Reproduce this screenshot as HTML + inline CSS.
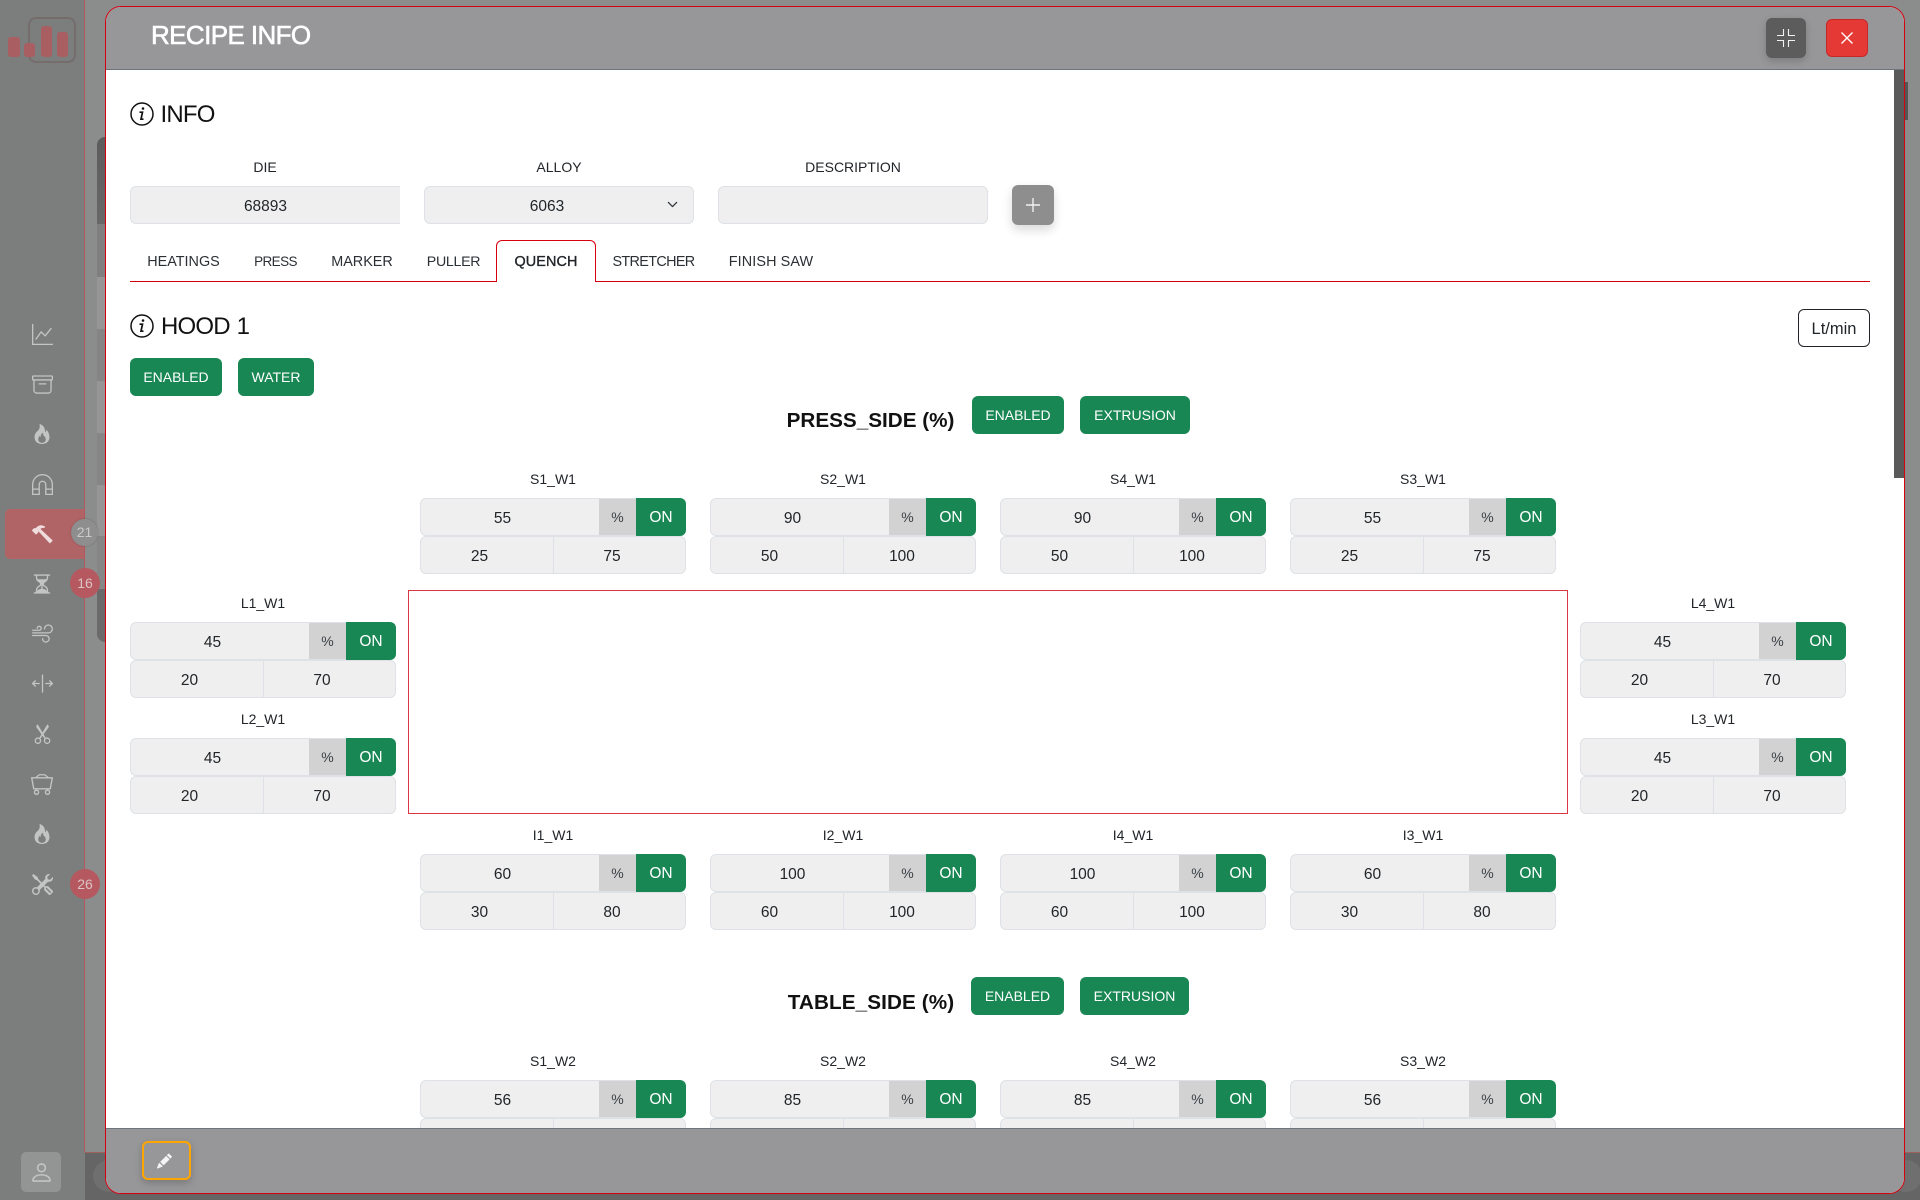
<!DOCTYPE html>
<html lang="en">
<head>
<meta charset="utf-8">
<title>Recipe Info</title>
<style>
html,body{margin:0;padding:0;width:1920px;height:1200px;overflow:hidden;background:#7c7e7d;font-family:"Liberation Sans",sans-serif;color:#212529}
*{box-sizing:border-box}
.a{position:absolute}
.t{position:absolute;white-space:nowrap;text-align:center;transform:translateX(-50%);line-height:20px}
svg{position:absolute;display:block}
.ic{fill:#c3c5c4}
.modal{position:absolute;left:105px;top:6px;width:1800px;height:1188px;border:1px solid #d7000f;border-radius:16px;overflow:hidden;background:#fff}
.in{position:absolute;left:-106px;top:-7px;width:1920px;height:1200px}
.f{position:absolute;background:#efefef;border:1px solid #dee2e6;height:38px}
.btn{position:absolute;background:#198754;color:#fff;border-radius:6px;height:38px;line-height:39px;text-align:center;font-size:14px;white-space:nowrap}
.g{position:absolute;width:266px;height:76px;font-size:15.5px}
.g .lb{position:absolute;left:0;width:266px;top:-29.5px;height:20px;line-height:20px;text-align:center;font-size:14px}
.g .n{position:absolute;left:0;top:0;width:179px;height:38px;background:#efefef;border:1px solid #dee2e6;border-right:0;border-radius:6px 0 0 6px;line-height:39px;text-align:center;padding-right:15px}
.g .p{position:absolute;left:179px;top:0;width:37px;height:38px;background:#d2d2d2;border:1px solid #dee2e6;border-width:1px 0;line-height:37px;text-align:center;font-size:14px;color:#3a3f44}
.g .o{position:absolute;left:216px;top:0;width:50px;height:38px;background:#198754;color:#fff;border-radius:0 6px 6px 0;line-height:40px;text-align:center}
.g .x{position:absolute;left:0;top:38px;width:134px;height:38px;background:#efefef;border:1px solid #dee2e6;border-radius:6px 0 0 6px;line-height:39px;text-align:center;padding-right:15px}
.g .y{position:absolute;left:133px;top:38px;width:133px;height:38px;background:#efefef;border:1px solid #dee2e6;border-radius:0 6px 6px 0;line-height:39px;text-align:center;padding-right:15px}
.h{position:absolute;font-size:24px;letter-spacing:-.8px;line-height:30px;white-space:nowrap;color:#111}
.sec{position:absolute;font-size:20.7px;font-weight:bold;line-height:28px;white-space:nowrap;transform:translateX(-50%);color:#111}
.tab{font-size:14.4px;color:#2b3035;top:252px}
</style>
</head>
<body>

<!-- background behind the modal -->
<div class="a" style="left:85px;top:0;width:1835px;height:1152px;background:#8b8d8c"></div>
<div class="a" style="left:97px;top:137px;width:8px;height:87px;background:linear-gradient(#5c5c5c,#686868);border-radius:8px 0 0 0"></div>
<div class="a" style="left:97px;top:224px;width:8px;height:53px;background:#7f7f7f"></div>
<div class="a" style="left:97px;top:277px;width:8px;height:52px;background:#969696"></div>
<div class="a" style="left:97px;top:329px;width:8px;height:52px;background:#858585"></div>
<div class="a" style="left:97px;top:381px;width:8px;height:52px;background:#969696"></div>
<div class="a" style="left:97px;top:433px;width:8px;height:52px;background:#868686"></div>
<div class="a" style="left:97px;top:485px;width:8px;height:51px;background:#969696"></div>
<div class="a" style="left:97px;top:536px;width:8px;height:53px;background:#868686"></div>
<div class="a" style="left:97px;top:589px;width:8px;height:53px;background:#6a6a6a;border-radius:0 0 0 8px"></div>
<div class="a" style="left:1905px;top:82px;width:3px;height:38px;background:#555"></div>
<div class="a" style="left:85px;top:1152px;width:1835px;height:48px;background:#646564;border-top:1px solid #a06060"></div>
<div class="a" style="left:93px;top:1160px;width:32px;height:32px;border-radius:50%;background:#6f6f6f"></div>
<div class="a" style="left:1890px;top:1160px;width:32px;height:32px;border-radius:50%;background:#6f6f6f"></div>

<!-- sidebar -->
<div class="a" style="left:0;top:0;width:85px;height:1200px;background:#7c7e7d"></div>
<div class="a" style="left:84px;top:0;width:1px;height:1152px;background:#b3585e"></div>

<!-- logo -->
<div class="a" style="left:28px;top:17px;width:48px;height:46px;border:2px solid #756c6c;border-radius:8px"></div>
<div class="a" style="left:8px;top:37px;width:12px;height:20px;background:#a95f61;border-radius:3px"></div>
<div class="a" style="left:24px;top:43px;width:11px;height:14px;background:#a95f61;border-radius:3px"></div>
<div class="a" style="left:41px;top:26px;width:11px;height:31px;background:#a95f61;border-radius:3px"></div>
<div class="a" style="left:57px;top:32px;width:11px;height:25px;background:#a95f61;border-radius:3px"></div>

<div class="a" style="left:5px;top:509px;width:79px;height:50px;background:#b06466;border-radius:5px 0 0 5px"></div>

<svg class="ic" style="left:32px;top:324px" width="21" height="21" viewBox="0 0 16 16"><path d="M0 0h1v15h15v1H0V0Zm14.817 3.113a.5.5 0 0 1 .07.704l-4.5 5.5a.5.5 0 0 1-.74.037L7.06 6.767l-3.656 5.027a.5.5 0 0 1-.808-.588l4-5.5a.5.5 0 0 1 .758-.06l2.609 2.61 4.15-5.073a.5.5 0 0 1 .704-.07Z"/></svg>
<svg class="ic" style="left:32px;top:374px" width="21" height="21" viewBox="0 0 16 16"><path d="M0 2a1 1 0 0 1 1-1h14a1 1 0 0 1 1 1v2a1 1 0 0 1-1 1v7.5a2.5 2.5 0 0 1-2.5 2.5h-9A2.5 2.5 0 0 1 1 12.5V5a1 1 0 0 1-1-1V2zm2 3v7.5A1.5 1.5 0 0 0 3.5 14h9a1.5 1.5 0 0 0 1.5-1.5V5H2zm13-3H1v2h14V2zM5 7.5a.5.5 0 0 1 .5-.5h5a.5.5 0 0 1 0 1h-5a.5.5 0 0 1-.5-.5z"/></svg>
<svg class="ic" style="left:32px;top:424px" width="20" height="20" viewBox="0 0 16 16"><path fill-rule="evenodd" d="M8 16c3.314 0 6-2 6-5.5 0-1.5-.5-4-2.5-6 .25 1.5-1.25 2-1.25 2C11 4 9 .5 6 0c.357 2 .5 4-2 6-1.25 1-2 2.729-2 4.5C2 14 4.686 16 8 16Zm0-1c-1.657 0-3-1-3-2.75 0-.75.25-2 1.25-3C6.125 10 7 10.5 7 10.5c-.375-1.25.5-3.25 2-3.5-.179 1-.25 2 1 3 .625.5 1 1.364 1 2.25C11 14 9.657 15 8 15Z"/></svg>
<svg class="ic" style="left:32px;top:474px" width="21" height="21" viewBox="0 0 16 16"><path d="M8 1a7 7 0 0 0-7 7v3h4V8a3 3 0 0 1 6 0v3h4V8a7 7 0 0 0-7-7Zm7 11h-4v3h4v-3ZM5 12H1v3h4v-3ZM0 8a8 8 0 1 1 16 0v8h-6V8a2 2 0 1 0-4 0v8H0V8Z"/></svg>
<svg style="left:32px;top:524px;fill:#efdcdc" width="21" height="21" viewBox="0 0 16 16"><path d="M9.972 2.508a.5.5 0 0 0-.16-.556l-.178-.129a5.009 5.009 0 0 0-2.076-.783C6.215.862 4.504 1.229 2.84 3.133H1.786a.5.5 0 0 0-.354.147L.146 4.567a.5.5 0 0 0 0 .706l2.571 2.579a.5.5 0 0 0 .708 0l1.286-1.29a.5.5 0 0 0 .146-.353V5.57l8.387 8.873A.5.5 0 0 0 14 14.5l1.5-1.5a.5.5 0 0 0 .017-.689l-9.129-8.63c.747-.456 1.772-.839 3.112-.839a.5.5 0 0 0 .472-.334z"/></svg>
<svg class="ic" style="left:31px;top:573px" width="22" height="22" viewBox="0 0 16 16"><path d="M2.5 15a.5.5 0 1 1 0-1h1v-1a4.5 4.5 0 0 1 2.557-4.06c.29-.139.443-.377.443-.59v-.7c0-.213-.154-.451-.443-.59A4.5 4.5 0 0 1 3.5 3V2h-1a.5.5 0 0 1 0-1h11a.5.5 0 0 1 0 1h-1v1a4.5 4.5 0 0 1-2.557 4.06c-.29.139-.443.377-.443.59v.7c0 .213.154.451.443.59A4.5 4.5 0 0 1 12.5 13v1h1a.5.5 0 0 1 0 1h-11zm2-13v1c0 .537.12 1.045.337 1.5h6.326c.216-.455.337-.963.337-1.5V2h-7zm3 6.35c0 .701-.478 1.236-1.011 1.492A3.5 3.5 0 0 0 4.5 13s.866-1.299 3-1.48V8.35zm1 0v3.17c2.134.181 3 1.48 3 1.48a3.5 3.5 0 0 0-1.989-3.158C8.978 9.586 8.5 9.052 8.5 8.351z"/></svg>
<svg class="ic" style="left:32px;top:623px" width="21" height="21" viewBox="0 0 16 16"><path d="M12.5 2A2.5 2.5 0 0 0 10 4.5a.5.5 0 0 1-1 0A3.5 3.5 0 1 1 12.5 8H.5a.5.5 0 0 1 0-1h12a2.5 2.5 0 0 0 0-5zm-7 1a1 1 0 0 0-1 1 .5.5 0 0 1-1 0 2 2 0 1 1 2 2h-5a.5.5 0 0 1 0-1h5a1 1 0 0 0 0-2zM0 9.5A.5.5 0 0 1 .5 9h10.042a3 3 0 1 1-3 3 .5.5 0 0 1 1 0 2 2 0 1 0 2-2H.5a.5.5 0 0 1-.5-.5z"/></svg>
<svg class="ic" style="left:32px;top:673px" width="21" height="21" viewBox="0 0 16 16"><path d="M8 15a.5.5 0 0 1-.5-.5v-13a.5.5 0 0 1 1 0v13a.5.5 0 0 1-.5.5ZM.146 8.354a.5.5 0 0 1 0-.708l2-2a.5.5 0 1 1 .708.708L1.707 7.5H5.5a.5.5 0 0 1 0 1H1.707l1.147 1.146a.5.5 0 0 1-.708.708l-2-2ZM10 8a.5.5 0 0 1 .5-.5h3.793l-1.147-1.146a.5.5 0 0 1 .708-.708l2 2a.5.5 0 0 1 0 .708l-2 2a.5.5 0 0 1-.708-.708L14.293 8.5H10.5A.5.5 0 0 1 10 8Z"/></svg>
<svg class="ic" style="left:32px;top:723px" width="21" height="21" viewBox="0 0 16 16"><path d="M3.5 3.5c-.614-.884-.074-1.962.858-2.5L8 7.226 11.642 1c.932.538 1.472 1.616.858 2.5L8.81 8.61l1.556 2.661a2.5 2.5 0 1 1-.794.637L8 9.73l-1.572 2.177a2.5 2.5 0 1 1-.794-.637L7.19 8.61 3.5 3.5zm2.5 10a1.5 1.5 0 1 0-3 0 1.5 1.5 0 0 0 3 0zm7 0a1.5 1.5 0 1 0-3 0 1.5 1.5 0 0 0 3 0z"/></svg>
<svg class="ic" style="left:31px;top:773px" width="22" height="22" viewBox="0 0 16 16"><path d="M4 15a1 1 0 1 1 0-2 1 1 0 0 1 0 2zm0 1a2 2 0 1 0 0-4 2 2 0 0 0 0 4zm8-1a1 1 0 1 1 0-2 1 1 0 0 1 0 2zm0 1a2 2 0 1 0 0-4 2 2 0 0 0 0 4zM.115 3.18A.5.5 0 0 1 .5 3h15a.5.5 0 0 1 .491.592l-1.5 8A.5.5 0 0 1 14 12H2a.5.5 0 0 1-.491-.408l-1.5-8a.5.5 0 0 1 .106-.411zm.987.82 1.313 7h11.17l1.313-7H1.102z"/><path d="M3 3.2 5.8.8h4.4L13 3.2l-.7.5L9.8 1.7H6.2L3.7 3.7z"/></svg>
<svg class="ic" style="left:32px;top:824px" width="20" height="20" viewBox="0 0 16 16"><path fill-rule="evenodd" d="M8 16c3.314 0 6-2 6-5.5 0-1.5-.5-4-2.5-6 .25 1.5-1.25 2-1.25 2C11 4 9 .5 6 0c.357 2 .5 4-2 6-1.25 1-2 2.729-2 4.5C2 14 4.686 16 8 16Zm0-1c-1.657 0-3-1-3-2.75 0-.75.25-2 1.25-3C6.125 10 7 10.5 7 10.5c-.375-1.25.5-3.25 2-3.5-.179 1-.25 2 1 3 .625.5 1 1.364 1 2.25C11 14 9.657 15 8 15Z"/></svg>
<svg class="ic" style="left:32px;top:874px" width="21" height="21" viewBox="0 0 16 16"><path d="M1 0 0 1l2.2 3.081a1 1 0 0 0 .815.419h.07a1 1 0 0 1 .708.293l2.675 2.675-2.617 2.654A3.003 3.003 0 0 0 0 13a3 3 0 1 0 5.878-.851l2.654-2.617.968.968-.305.914a1 1 0 0 0 .242 1.023l3.27 3.27a.997.997 0 0 0 1.414 0l1.586-1.586a.997.997 0 0 0 0-1.414l-3.27-3.27a1 1 0 0 0-1.023-.242L10.5 9.5l-.96-.96 2.68-2.643A3.005 3.005 0 0 0 16 3c0-.269-.035-.53-.102-.777l-2.14 2.141L12 4l-.364-1.757L13.777.102a3 3 0 0 0-3.675 3.68L7.462 6.46 4.793 3.793a1 1 0 0 1-.293-.707v-.071a1 1 0 0 0-.419-.814L1 0Zm9.646 10.646a.5.5 0 0 1 .708 0l2.914 2.915a.5.5 0 0 1-.707.707l-2.915-2.914a.5.5 0 0 1 0-.708ZM3 11l.471.242.529.026.287.445.445.287.026.529L5 13l-.242.471-.026.529-.445.287-.287.445-.529.026L3 15l-.471-.242L2 14.732l-.287-.445L1.268 14l-.026-.529L1 13l.242-.471.026-.529.445-.287.287-.445.529-.026L3 11Z"/></svg>

<!-- badges -->
<div class="a" style="left:71px;top:519px;width:27px;height:27px;border-radius:50%;background:#8d8e8d;color:#c9c9c9;font-size:14px;line-height:27px;text-align:center;box-shadow:0 0 2px rgba(0,0,0,.2)">21</div>
<div class="a" style="left:70px;top:568px;width:30px;height:30px;border-radius:50%;background:#b5585f;color:#dcc3c5;font-size:14px;line-height:30px;text-align:center">16</div>
<div class="a" style="left:70px;top:869px;width:30px;height:30px;border-radius:50%;background:#b5585f;color:#dcc3c5;font-size:14px;line-height:30px;text-align:center">26</div>

<!-- user -->
<div class="a" style="left:21px;top:1152px;width:40px;height:40px;background:#939594;border-radius:5px"></div>
<svg class="ic" style="left:28.5px;top:1160px" width="25" height="25" viewBox="0 0 16 16"><path d="M8 8a3 3 0 1 0 0-6 3 3 0 0 0 0 6Zm2-3a2 2 0 1 1-4 0 2 2 0 0 1 4 0Zm4 8c0 1-1 1-1 1H3s-1 0-1-1 1-4 6-4 6 3 6 4Zm-1-.004c-.001-.246-.154-.986-.832-1.664C11.516 10.68 10.289 10 8 10c-2.29 0-3.516.68-4.168 1.332-.678.678-.83 1.418-.832 1.664h10Z"/></svg>

<!-- modal -->
<div class="modal"><div class="in">

  <!-- scrollable content -->
  <div class="a" style="left:0;top:0;width:1920px;height:1128px;overflow:hidden">

    <svg style="left:130px;top:101.5px" width="24" height="24" viewBox="0 0 24 24" fill="none" stroke="#111" stroke-width="1.5"><circle cx="12" cy="12" r="11"/><path d="M9.5 10.2h3l-1.5 7h2.5" stroke-width="1.7"/><circle cx="13" cy="6.5" r="1.3" fill="#111" stroke="none"/></svg>
    <div class="h" style="left:160.5px;top:99.5px">INFO</div>

    <div class="t" style="left:265px;top:157px;font-size:14px">DIE</div>
    <div class="t" style="left:559px;top:157px;font-size:14px">ALLOY</div>
    <div class="t" style="left:853px;top:157px;font-size:14px">DESCRIPTION</div>

    <div class="f" style="left:130px;top:186px;width:270px;border-radius:6px 0 0 6px;border-right:0;text-align:center;line-height:39px;font-size:15.5px">68893</div>
    <div class="f" style="left:424px;top:186px;width:270px;border-radius:6px;text-align:center;line-height:39px;font-size:15.5px;padding-right:24px">6063</div>
    <svg style="left:667px;top:199px" width="11" height="11" viewBox="0 0 16 16" fill="none" stroke="#343a40" stroke-width="2" stroke-linecap="round" stroke-linejoin="round"><path d="m2 5 6 6 6-6"/></svg>
    <div class="f" style="left:718px;top:186px;width:270px;border-radius:6px"></div>
    <div class="a" style="left:1012px;top:185px;width:42px;height:40px;background:#8e8e8e;border-radius:6px;box-shadow:0 5px 10px rgba(0,0,0,.15)"></div>
    <svg style="left:1026px;top:198px" width="14" height="14" viewBox="0 0 14 14" stroke="#f0f0f0" stroke-width="1.4"><path d="M7 0v14M0 7h14"/></svg>

    <!-- tabs -->
    <div class="a" style="left:130px;top:281px;width:1740px;height:1px;background:#d7000f"></div>
    <div class="a" style="left:496px;top:240px;width:100px;height:42px;background:#fff;border:1px solid #d7000f;border-bottom:0;border-radius:6px 6px 0 0"></div>
    <div class="t tab" style="left:183.5px">HEATINGS</div>
    <div class="t tab" style="left:275.5px;font-size:13.5px;letter-spacing:-.6px">PRESS</div>
    <div class="t tab" style="left:362px">MARKER</div>
    <div class="t tab" style="left:453.5px;font-size:14.2px;letter-spacing:-.3px">PULLER</div>
    <div class="t tab" style="left:546px;-webkit-text-stroke:.35px #212529;color:#212529;letter-spacing:.1px">QUENCH</div>
    <div class="t tab" style="left:653.5px;letter-spacing:-.65px">STRETCHER</div>
    <div class="t tab" style="left:771px;letter-spacing:.1px">FINISH SAW</div>

    <svg style="left:130px;top:313.5px" width="24" height="24" viewBox="0 0 24 24" fill="none" stroke="#111" stroke-width="1.5"><circle cx="12" cy="12" r="11"/><path d="M9.5 10.2h3l-1.5 7h2.5" stroke-width="1.7"/><circle cx="13" cy="6.5" r="1.3" fill="#111" stroke="none"/></svg>
    <div class="h" style="left:161px;top:311.5px;word-spacing:1px">HOOD 1</div>

    <div class="a" style="left:1798px;top:309px;width:72px;height:38px;border:1px solid #212529;border-radius:6px;text-align:center;line-height:38px;font-size:16.5px">Lt/min</div>

    <div class="btn" style="left:130px;top:358px;width:92px">ENABLED</div>
    <div class="btn" style="left:238px;top:358px;width:76px">WATER</div>

    <div class="sec" style="left:870.5px;top:407px">PRESS_SIDE (%)</div>
    <div class="btn" style="left:972px;top:396px;width:92px">ENABLED</div>
    <div class="btn" style="left:1080px;top:396px;width:110px">EXTRUSION</div>

    <!-- W1 top -->
    <div class="g" style="left:420px;top:498px"><div class="lb">S1_W1</div><div class="n">55</div><div class="p">%</div><div class="o">ON</div><div class="x">25</div><div class="y">75</div></div>
    <div class="g" style="left:710px;top:498px"><div class="lb">S2_W1</div><div class="n">90</div><div class="p">%</div><div class="o">ON</div><div class="x">50</div><div class="y">100</div></div>
    <div class="g" style="left:1000px;top:498px"><div class="lb">S4_W1</div><div class="n">90</div><div class="p">%</div><div class="o">ON</div><div class="x">50</div><div class="y">100</div></div>
    <div class="g" style="left:1290px;top:498px"><div class="lb">S3_W1</div><div class="n">55</div><div class="p">%</div><div class="o">ON</div><div class="x">25</div><div class="y">75</div></div>

    <!-- W1 left/right -->
    <div class="g" style="left:130px;top:622px"><div class="lb">L1_W1</div><div class="n">45</div><div class="p">%</div><div class="o">ON</div><div class="x">20</div><div class="y">70</div></div>
    <div class="g" style="left:130px;top:738px"><div class="lb">L2_W1</div><div class="n">45</div><div class="p">%</div><div class="o">ON</div><div class="x">20</div><div class="y">70</div></div>
    <div class="g" style="left:1580px;top:622px"><div class="lb">L4_W1</div><div class="n">45</div><div class="p">%</div><div class="o">ON</div><div class="x">20</div><div class="y">70</div></div>
    <div class="g" style="left:1580px;top:738px"><div class="lb">L3_W1</div><div class="n">45</div><div class="p">%</div><div class="o">ON</div><div class="x">20</div><div class="y">70</div></div>

    <div class="a" style="left:408px;top:590px;width:1160px;height:224px;border:1px solid #dc3545"></div>

    <!-- W1 bottom -->
    <div class="g" style="left:420px;top:854px"><div class="lb">I1_W1</div><div class="n">60</div><div class="p">%</div><div class="o">ON</div><div class="x">30</div><div class="y">80</div></div>
    <div class="g" style="left:710px;top:854px"><div class="lb">I2_W1</div><div class="n">100</div><div class="p">%</div><div class="o">ON</div><div class="x">60</div><div class="y">100</div></div>
    <div class="g" style="left:1000px;top:854px"><div class="lb">I4_W1</div><div class="n">100</div><div class="p">%</div><div class="o">ON</div><div class="x">60</div><div class="y">100</div></div>
    <div class="g" style="left:1290px;top:854px"><div class="lb">I3_W1</div><div class="n">60</div><div class="p">%</div><div class="o">ON</div><div class="x">30</div><div class="y">80</div></div>

    <div class="sec" style="left:871px;top:989px;letter-spacing:.1px">TABLE_SIDE (%)</div>
    <div class="btn" style="left:971px;top:977px;width:93px">ENABLED</div>
    <div class="btn" style="left:1080px;top:977px;width:109px">EXTRUSION</div>

    <!-- W2 top -->
    <div class="g" style="left:420px;top:1080px"><div class="lb">S1_W2</div><div class="n">56</div><div class="p">%</div><div class="o">ON</div><div class="x"></div><div class="y"></div></div>
    <div class="g" style="left:710px;top:1080px"><div class="lb">S2_W2</div><div class="n">85</div><div class="p">%</div><div class="o">ON</div><div class="x"></div><div class="y"></div></div>
    <div class="g" style="left:1000px;top:1080px"><div class="lb">S4_W2</div><div class="n">85</div><div class="p">%</div><div class="o">ON</div><div class="x"></div><div class="y"></div></div>
    <div class="g" style="left:1290px;top:1080px"><div class="lb">S3_W2</div><div class="n">56</div><div class="p">%</div><div class="o">ON</div><div class="x"></div><div class="y"></div></div>

    <!-- scrollbar thumb -->
    <div class="a" style="left:1894px;top:70px;width:10px;height:408px;background:#5a5a5a"></div>
  </div>

  <!-- header -->
  <div class="a" style="left:0;top:0;width:1920px;height:70px;background:#979799;border-bottom:1px solid #6c757d"></div>
  <div class="a" style="left:151px;top:20px;font-size:26px;line-height:30px;color:#fff;letter-spacing:-.6px;white-space:nowrap;-webkit-text-stroke:.6px #fff">RECIPE INFO</div>
  <div class="a" style="left:1766px;top:18px;width:40px;height:40px;background:#5c5c5c;border-radius:6px;box-shadow:0 3px 8px rgba(0,0,0,.18)"></div>
  <svg style="left:1776px;top:28px" width="20" height="20" viewBox="0 0 20 20" fill="none" stroke="#f2f2f2" stroke-width="1.1"><path d="M7.5 1v6.5H1M12.5 1v6.5H19M7.5 19v-6.5H1M12.5 19v-6.5H19"/></svg>
  <div class="a" style="left:1826px;top:19px;width:42px;height:38px;background:#e53935;border:1px solid #c62828;border-radius:6px"></div>
  <svg style="left:1841px;top:32px" width="12" height="12" viewBox="0 0 12 12" stroke="#fff" stroke-width="1.3"><path d="M.5.5l11 11M11.5.5l-11 11"/></svg>

  <!-- footer -->
  <div class="a" style="left:0;top:1128px;width:1920px;height:72px;background:#979799;border-top:1px solid #6c757d"></div>
  <div class="a" style="left:142px;top:1141px;width:49px;height:39px;border:2px solid #ffa500;border-radius:6px;box-shadow:0 3px 8px rgba(0,0,0,.2)"></div>
  <svg style="left:157px;top:1153px;fill:#f4f4f4" width="15" height="16" viewBox="0 0 16 16"><path d="M12.854.146a.5.5 0 0 0-.707 0L10.5 1.793 14.207 5.5l1.647-1.646a.5.5 0 0 0 0-.708l-3-3zm.646 6.061L9.793 2.5 3.293 9H3.5a.5.5 0 0 1 .5.5v.5h.5a.5.5 0 0 1 .5.5v.5h.5a.5.5 0 0 1 .5.5v.5h.5a.5.5 0 0 1 .5.5v.207l6.5-6.5zm-7.468 7.468A.5.5 0 0 1 6 13.5V13h-.5a.5.5 0 0 1-.5-.5V12h-.5a.5.5 0 0 1-.5-.5V11h-.5a.5.5 0 0 1-.5-.5V10h-.5a.499.499 0 0 1-.175-.032l-.179.178a.5.5 0 0 0-.11.168l-2 5a.5.5 0 0 0 .65.65l5-2a.5.5 0 0 0 .168-.11l.178-.178z"/></svg>

</div></div>
</body>
</html>
